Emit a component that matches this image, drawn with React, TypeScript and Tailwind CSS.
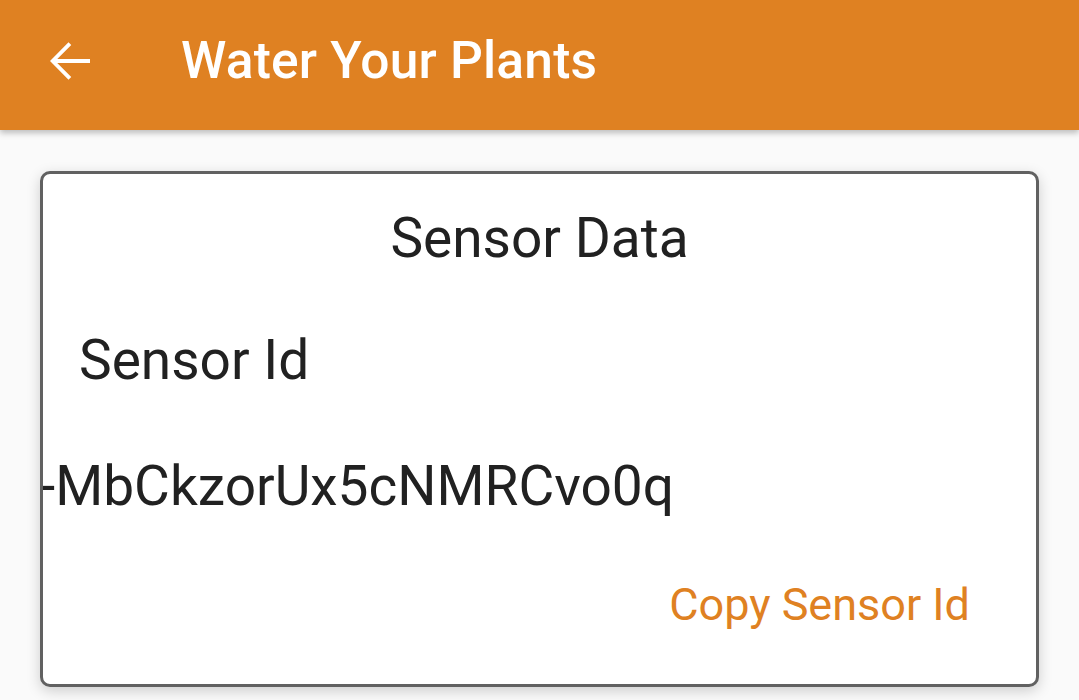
function BackArrow() {
  return (
    <svg viewBox="0 0 24 24" className="h-[60px] w-[60px]" fill="currentColor" aria-hidden="true">
      <path d="M20 11.2H6.9l5.6-5.6L11.4 4.5 4 12l7.4 7.5 1.1-1.1-5.6-5.6H20z" />
    </svg>
  );
}

export default function App() {
  return (
    <div
      className="flex h-[700px] w-[1079px] flex-col overflow-hidden bg-[#fafafa]"
      style={{ fontFamily: "Roboto, 'Noto Sans', sans-serif" }}
    >
      <header className="z-10 flex h-[130px] shrink-0 items-center bg-[#df8122] pb-[8px] shadow-[0_3px_6px_rgba(0,0,0,0.25)]">
        <button type="button" className="ml-[40px] flex items-center justify-center text-white">
          <BackArrow />
        </button>
        <h1 className="ml-[81px] text-[51.5px] font-medium leading-none tracking-[0.2px] text-white">
          Water Your Plants
        </h1>
      </header>

      <main className="px-[40px] pt-[41px]">
        <section className="flex h-[516px] flex-col overflow-hidden rounded-[10px] border-[3px] border-[#616161] bg-white shadow-[0_4px_14px_rgba(0,0,0,0.18)]">
          <h2 className="mt-[37px] text-center text-[55px] leading-none text-[#212121]">Sensor Data</h2>
          <p className="ml-[36px] mt-[67px] text-[55px] leading-none text-[#212121]">Sensor Id</p>
          <p className="ml-[-3px] mt-[71px] whitespace-nowrap text-[55px] leading-none text-[#212121]">
            -MbCkzorUx5cNMRCvo0q
          </p>
          <div className="mt-[68px] flex justify-end pr-[66px]">
            <button type="button" className="text-[45px] leading-none text-[#df8122]">
              Copy Sensor Id
            </button>
          </div>
        </section>
      </main>
    </div>
  );
}
